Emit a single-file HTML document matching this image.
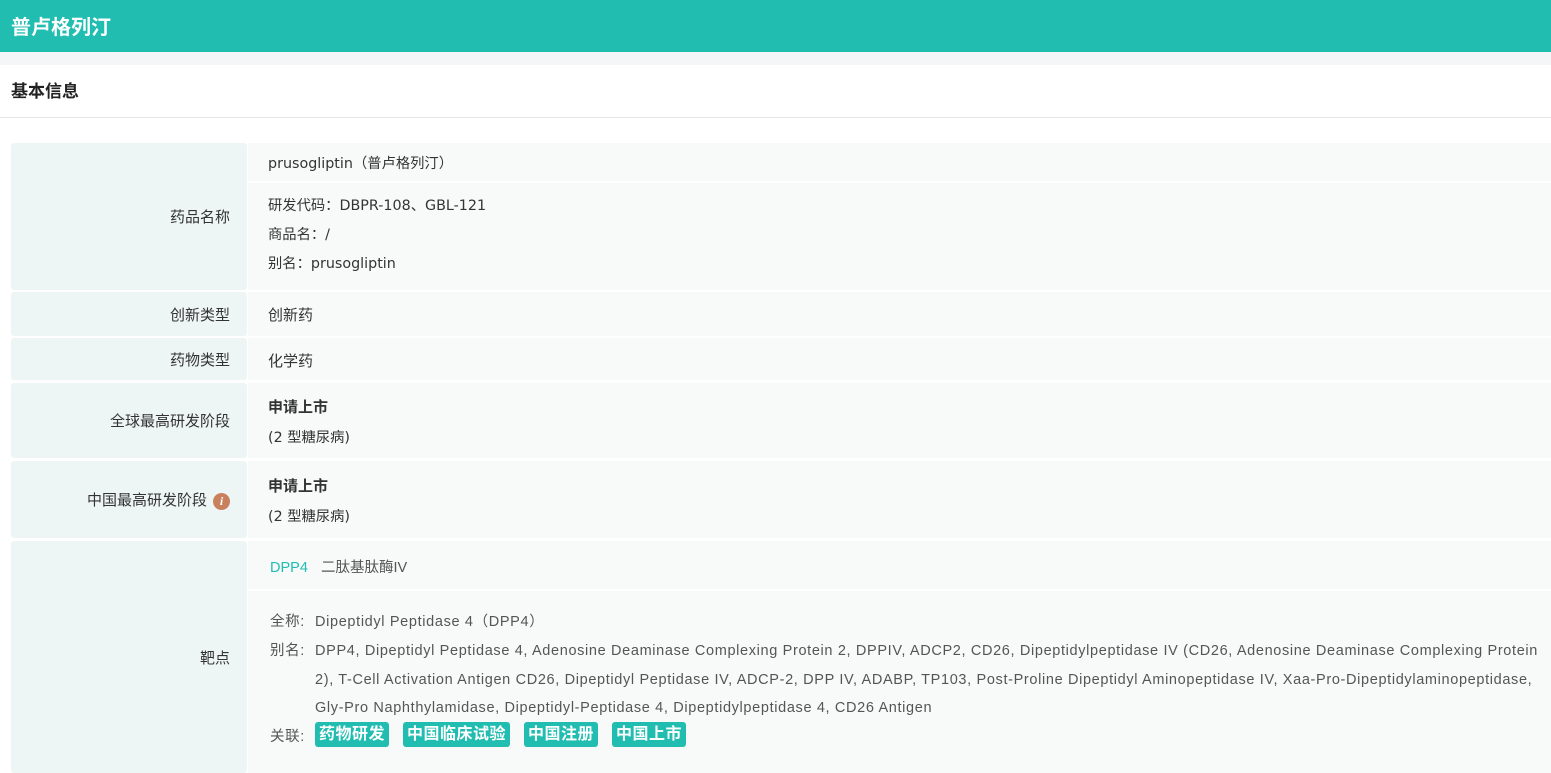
<!DOCTYPE html>
<html><head><meta charset="utf-8"><style>
*{margin:0;padding:0;box-sizing:border-box}
body{width:1551px;height:773px;overflow:hidden;background:#fff;font-family:"Liberation Sans","Noto Sans CJK SC",sans-serif;color:#333;position:relative}
.a{position:absolute;white-space:nowrap;line-height:20px}
.hdr{left:0;top:0;width:1551px;height:52px;background:#20bdb0;color:#fff;font-weight:bold;font-size:20px;padding:18px 0 0 11px}
.gap{left:0;top:52px;width:1551px;height:13px;background:#f5f6f8}
.lbl{background:#eef6f5;left:11px;width:236px;border-radius:3px;text-align:right;padding-right:17px;font-size:15px;color:#333;display:flex;align-items:center;justify-content:flex-end;padding-top:3px}
.val{background:#f8fafa;left:248px;width:1303px}
.t{font-size:15px;color:#333}
.d{font-family:"DejaVu Sans","Noto Sans CJK SC",sans-serif;font-size:14.3px}
.g{font-size:14.5px;color:#555;letter-spacing:0.65px}
.tag{display:inline-block;background:#20bdb0;color:#fff;font-weight:bold;font-size:16px;padding:0 4px;border-radius:3px;margin-right:14px;height:25px;line-height:25px;letter-spacing:0.5px}
</style></head><body>
<div class="a hdr">普卢格列汀</div>
<div class="a gap"></div>
<div class="a" style="left:11px;top:82px;font-size:17px;font-weight:bold;color:#222">基本信息</div>
<div class="a" style="left:0;top:117px;width:1551px;height:1px;background:#e6e6e6"></div>

<div class="a lbl" style="top:143px;height:147px">药品名称</div>
<div class="a val" style="top:143px;height:38px"></div>
<div class="a val" style="top:183px;height:107px"></div>
<div class="a t d" style="left:268px;top:154px">prusogliptin（普卢格列汀）</div>
<div class="a t d" style="left:268px;top:196px">研发代码：DBPR-108、GBL-121</div>
<div class="a t d" style="left:268px;top:225px">商品名：/</div>
<div class="a t d" style="left:268px;top:254px">别名：prusogliptin</div>

<div class="a lbl" style="top:292px;height:44px">创新类型</div>
<div class="a val" style="top:292px;height:44px"></div>
<div class="a t" style="left:268px;top:306px">创新药</div>

<div class="a lbl" style="top:338px;height:42px">药物类型</div>
<div class="a val" style="top:338px;height:42px"></div>
<div class="a t" style="left:268px;top:352px">化学药</div>

<div class="a lbl" style="top:383px;height:75px">全球最高研发阶段</div>
<div class="a val" style="top:383px;height:75px"></div>
<div class="a t" style="left:268px;top:398px;font-weight:bold">申请上市</div>
<div class="a t d" style="left:268px;top:428px">(2 型糖尿病)</div>

<div class="a lbl" style="top:461px;height:77px">中国最高研发阶段<span style="display:inline-block;width:17px;height:17px;border-radius:50%;background:#c9805d;color:#fff;font-size:12px;font-style:italic;font-weight:bold;text-align:center;line-height:17px;margin-left:6px;font-family:'Liberation Serif',serif">i</span></div>
<div class="a val" style="top:461px;height:77px"></div>
<div class="a t" style="left:268px;top:477px;font-weight:bold">申请上市</div>
<div class="a t d" style="left:268px;top:507px">(2 型糖尿病)</div>

<div class="a lbl" style="top:541px;height:232px">靶点</div>
<div class="a val" style="top:541px;height:48px"></div>
<div class="a val" style="top:591px;height:182px"></div>
<div class="a" style="left:270px;top:558px;font-size:14.5px;color:#20bdb0">DPP4</div>
<div class="a" style="left:321px;top:558px;font-size:14.5px;color:#555">二肽基肽酶IV</div>
<div class="a g" style="left:270px;top:612px">全称:</div>
<div class="a g" style="left:315px;top:612px">Dipeptidyl Peptidase 4（DPP4）</div>
<div class="a g" style="left:270px;top:641px">别名:</div>
<div class="a g" style="left:315px;top:641px">DPP4, Dipeptidyl Peptidase 4, Adenosine Deaminase Complexing Protein 2, DPPIV, ADCP2, CD26, Dipeptidylpeptidase IV (CD26, Adenosine Deaminase Complexing Protein</div>
<div class="a g" style="left:315px;top:670px">2), T-Cell Activation Antigen CD26, Dipeptidyl Peptidase IV, ADCP-2, DPP IV, ADABP, TP103, Post-Proline Dipeptidyl Aminopeptidase IV, Xaa-Pro-Dipeptidylaminopeptidase,</div>
<div class="a g" style="left:315px;top:698px">Gly-Pro Naphthylamidase, Dipeptidyl-Peptidase 4, Dipeptidylpeptidase 4, CD26 Antigen</div>
<div class="a g" style="left:270px;top:727px">关联:</div>
<div class="a" style="left:315px;top:722px"><span class="tag">药物研发</span><span class="tag">中国临床试验</span><span class="tag">中国注册</span><span class="tag">中国上市</span></div>
</body></html>
